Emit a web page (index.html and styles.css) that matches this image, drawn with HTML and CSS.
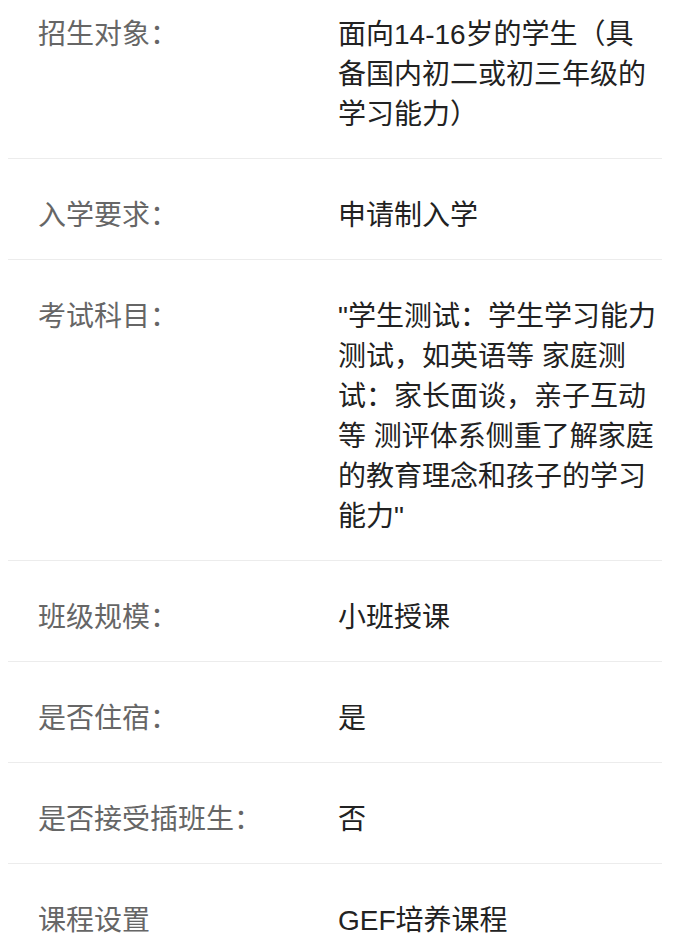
FILE: index.html
```html
<!DOCTYPE html>
<html lang="zh-CN">
<head>
<meta charset="utf-8">
<title>招生信息</title>
<link rel="stylesheet" href="styles.css">
</head>
<body>
<div class="info-list">
  <div class="row first">
    <div class="label">招生对象：</div>
    <div class="value">面向14-16岁的学生（具备国内初二或初三年级的学习能力）</div>
  </div>
  <div class="row">
    <div class="label">入学要求：</div>
    <div class="value">申请制入学</div>
  </div>
  <div class="row">
    <div class="label">考试科目：</div>
    <div class="value">"学生测试：学生学习能力测试，如英语等 家庭测试：家长面谈，亲子互动等 测评体系侧重了解家庭的教育理念和孩子的学习能力"</div>
  </div>
  <div class="row">
    <div class="label">班级规模：</div>
    <div class="value">小班授课</div>
  </div>
  <div class="row">
    <div class="label">是否住宿：</div>
    <div class="value">是</div>
  </div>
  <div class="row">
    <div class="label">是否接受插班生：</div>
    <div class="value">否</div>
  </div>
  <div class="row">
    <div class="label">课程设置</div>
    <div class="value">GEF培养课程</div>
  </div>
</div>
</body>
</html>
```

FILE: styles.css
```css
html, body {
  margin: 0;
  padding: 0;
  background: #ffffff;
}

body {
  font-family: "Liberation Sans", "Noto Sans CJK SC", sans-serif;
  font-size: 28px;
  line-height: 40px;
}

.info-list {
  width: 654px;
  margin-left: 8px;
}

.row {
  display: flex;
  align-items: flex-start;
  padding: 37px 0 23px 30px;
  border-bottom: 1px solid #ececec;
}

.row.first {
  padding-top: 15px;
}

.label {
  flex: 0 0 300px;
  color: #666666;
}

.value {
  width: 320px;
  color: #222222;
}
```
